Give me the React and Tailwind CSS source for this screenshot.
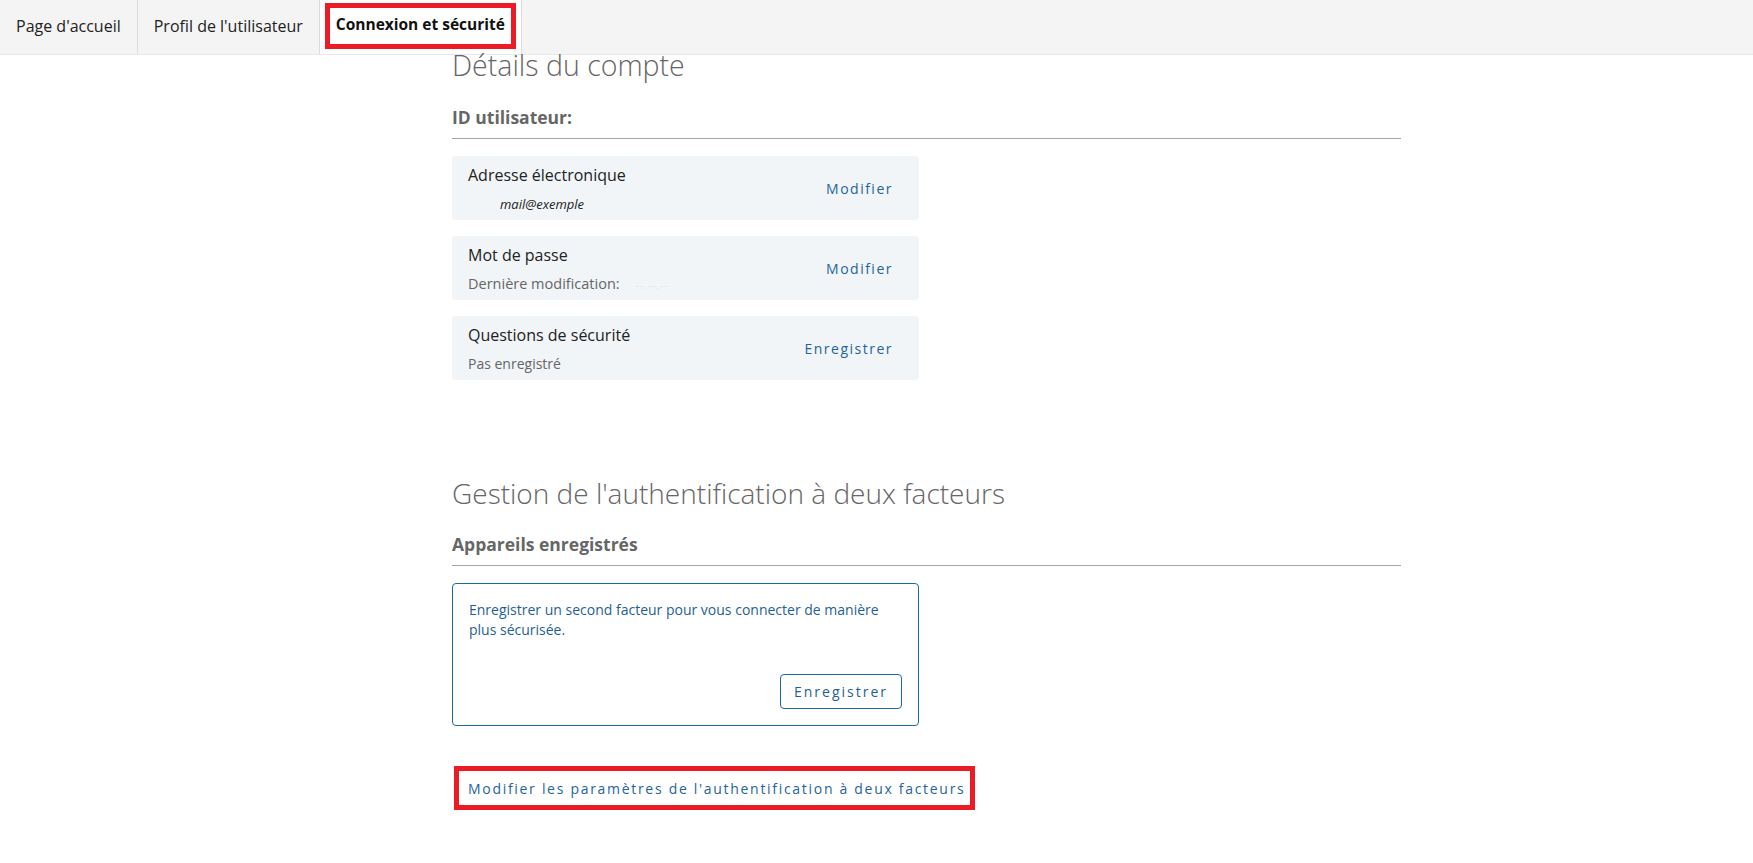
import React from 'react';

const tabs = [
    { label: "Page d'accueil", active: false },
    { label: "Profil de l'utilisateur", active: false },
    { label: 'Connexion et sécurité', active: true },
];

const AccountCard = ({ title, children, action }) => (
    <div className="flex h-16 w-[467px] items-center justify-between rounded bg-[#f1f5f8] pl-4 pr-[26px]">
        <div className="flex flex-col self-start pt-2">
            <span className="text-[16px] leading-[22px] text-[#222]">{title}</span>
            <div className="mt-[5px]">{children}</div>
        </div>
        <button type="button" className="text-[14px] tracking-[1.5px] text-[#1f649b]">
            {action}
        </button>
    </div>
);

const SectionLabel = ({ children }) => (
    <>
        <h3 className="text-[17.5px] font-bold leading-6 text-[#666]">{children}</h3>
        <div className="mt-[9px] h-px w-[949px] bg-[#a3a3a3]" />
    </>
);

const App = () => {
    return (
        <div className="min-h-screen bg-white font-['Open_Sans',sans-serif]">
            {/* top tabs */}
            <nav className="flex h-[55px] border-b border-[#e8e8e8] bg-[#f4f4f4]">
                {tabs.map((tab) =>
                    tab.active ? (
                        <div key={tab.label} className="flex items-start border-r border-[#dcdcdc] bg-white px-[5px] pt-[3px]">
                            <span className="flex h-[46px] items-center border-[5px] border-[#ed1c24] px-[6px] pb-[2px] text-[15.5px] font-bold text-[#111]">
                                {tab.label}
                            </span>
                        </div>
                    ) : (
                        <div key={tab.label} className="flex items-center border-r border-[#dcdcdc] px-4 pb-[3px] text-[16px] text-[#222]">
                            {tab.label}
                        </div>
                    )
                )}
            </nav>

            <main className="ml-[452px] pb-16">
                {/* account details */}
                <h2 className="-mt-[7px] text-[28.5px] font-light leading-[34px] text-[#666]">Détails du compte</h2>
                <div className="mt-[23px]">
                    <SectionLabel>ID utilisateur:</SectionLabel>
                </div>

                <div className="mt-[17px] flex flex-col gap-4">
                    <AccountCard title="Adresse électronique" action="Modifier">
                        <span className="pl-8 text-[13px] italic leading-[18px] text-[#222]">mail@exemple</span>
                    </AccountCard>
                    <AccountCard title="Mot de passe" action="Modifier">
                        <span className="text-[14.5px] leading-[18px] text-[#666]">
                            Dernière modification:
                            <span className="ml-4 text-[10px] tracking-[1px] text-[#dfe5ea]">--.--.--</span>
                        </span>
                    </AccountCard>
                    <AccountCard title="Questions de sécurité" action="Enregistrer">
                        <span className="text-[14px] leading-[18px] text-[#666]">Pas enregistré</span>
                    </AccountCard>
                </div>

                {/* two factor */}
                <h2 className="mt-24 text-[28px] font-light leading-[34px] text-[#666]">
                    Gestion de l'authentification à deux facteurs
                </h2>
                <div className="mt-[22px]">
                    <SectionLabel>Appareils enregistrés</SectionLabel>
                </div>

                <div className="mt-[17px] flex h-[143px] w-[467px] flex-col rounded border border-[#1b6aa3] px-4 pt-4 pb-4">
                    <p className="text-[14px] leading-5 text-[#1f5f93]">
                        Enregistrer un second facteur pour vous connecter de manière plus sécurisée.
                    </p>
                    <div className="mt-auto flex justify-end">
                        <button type="button" className="h-[35px] w-[122px] rounded-sm border border-[#1b6aa3] text-[14px] tracking-[2px] text-[#1f5f93]">
                            Enregistrer
                        </button>
                    </div>
                </div>

                <div className="ml-[2px] mt-10 inline-flex h-[44px] items-center border-[5px] border-[#ed1c24] pl-[9px] pr-[5px]">
                    <a href="#" className="text-[14px] tracking-[1.7px] text-[#1f649b]">
                        Modifier les paramètres de l'authentification à deux facteurs
                    </a>
                </div>
            </main>
        </div>
    );
};

export default App;
